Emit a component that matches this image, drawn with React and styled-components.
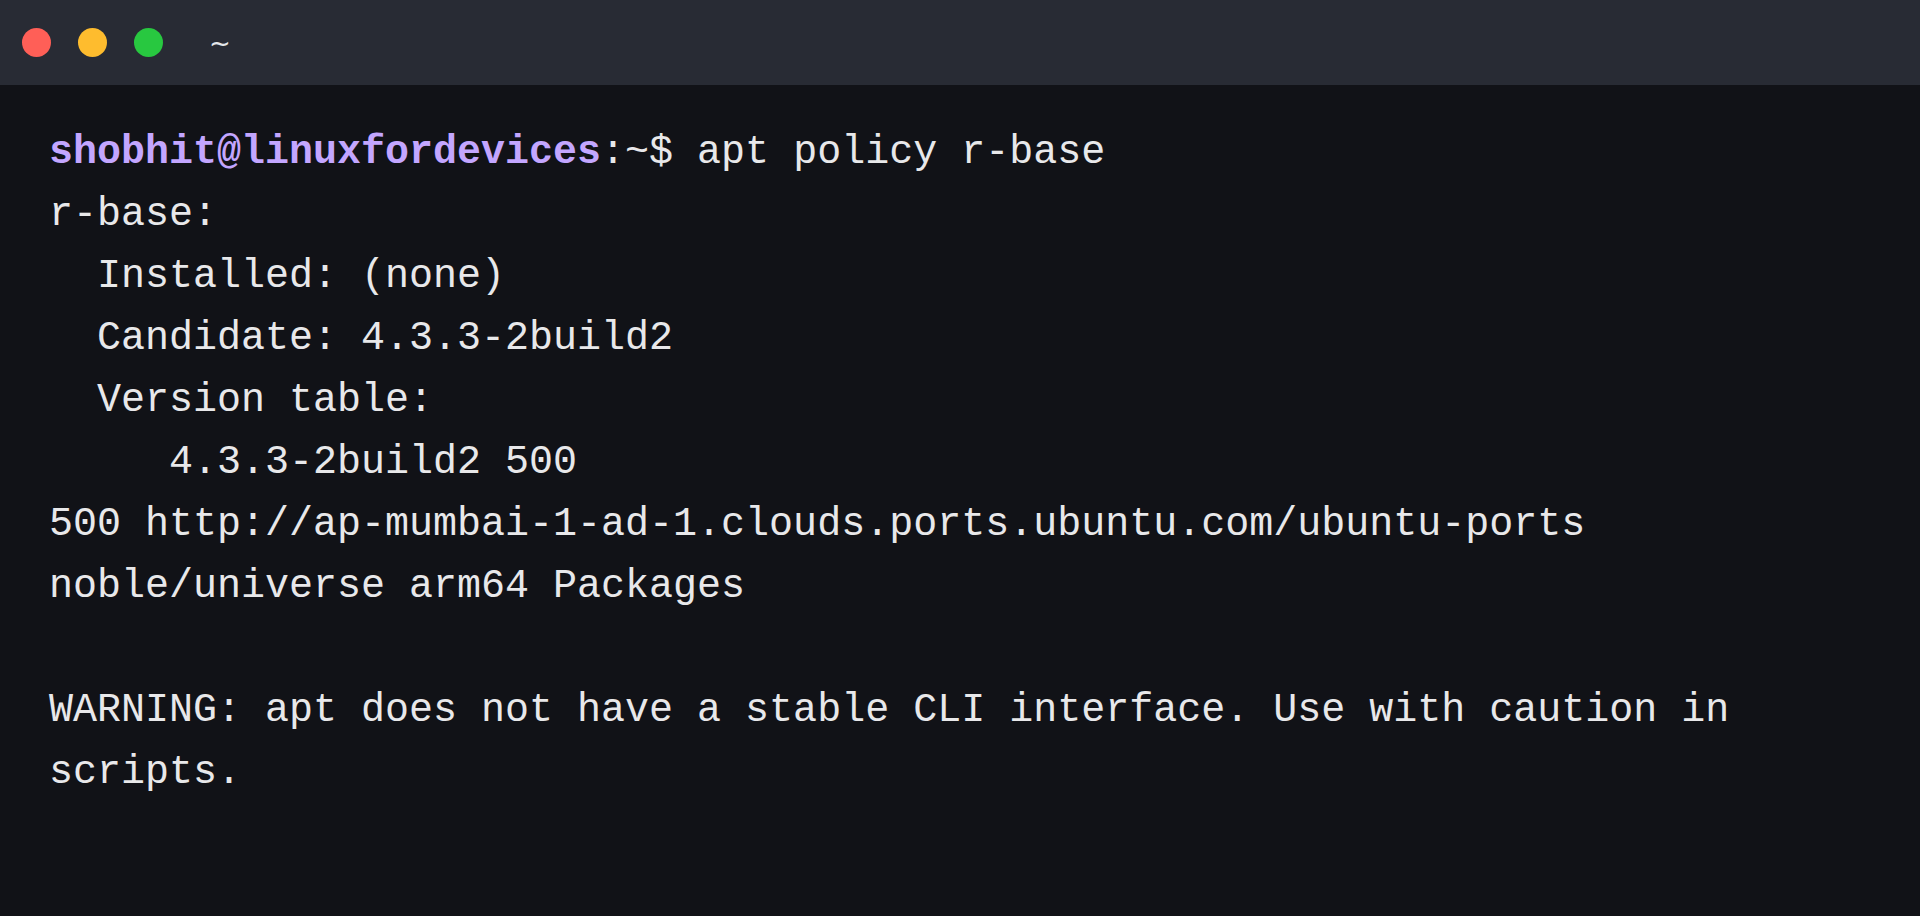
import React from "react";
import styled, { createGlobalStyle } from "styled-components";

const lines = [
  { prompt: true, text: " apt policy r-base" },
  { text: "r-base:" },
  { text: "  Installed: (none)" },
  { text: "  Candidate: 4.3.3-2build2" },
  { text: "  Version table:" },
  { text: "     4.3.3-2build2 500" },
  { text: "500 http://ap-mumbai-1-ad-1.clouds.ports.ubuntu.com/ubuntu-ports" },
  { text: "noble/universe arm64 Packages" },
  { text: "" },
  { text: "WARNING: apt does not have a stable CLI interface. Use with caution in" },
  { text: "scripts." },
];

export default function App() {
  return (
    <>
      <GlobalStyle />
      <Window>
        <TitleBar>
          <Dots>
            <Dot color="#ff5f57" />
            <Dot color="#febc2e" />
            <Dot color="#28c840" />
          </Dots>
          <Title>~</Title>
        </TitleBar>
        <Terminal>
          {lines.map((l, i) => (
            <Line key={i}>
              {l.prompt && (
                <>
                  <User>shobhit@linuxfordevices</User>:~$
                </>
              )}
              {l.text || " "}
            </Line>
          ))}
        </Terminal>
      </Window>
    </>
  );
}

const GlobalStyle = createGlobalStyle`
  html, body {
    margin: 0;
    padding: 0;
    background: #111217;
  }
`;

const Window = styled.div`
  display: flex;
  flex-direction: column;
  min-height: 100vh;
  background: #111217;
`;

const TitleBar = styled.div`
  height: 85px;
  display: flex;
  align-items: center;
  padding-left: 22px;
  gap: 46px;
  background: #282b34;
`;

const Dots = styled.div`
  display: flex;
  gap: 27px;
`;

const Dot = styled.span`
  width: 29px;
  height: 29px;
  border-radius: 50%;
  background: ${(p) => p.color};
`;

const Title = styled.span`
  font-family: "DejaVu Sans", sans-serif;
  font-size: 26px;
  color: #e4e6ea;
  line-height: 1;
`;

const Terminal = styled.div`
  padding: 37px 49px;
  font-family: "Liberation Mono", "DejaVu Sans Mono", monospace;
  font-size: 40px;
  line-height: 62px;
  color: #e8e8ea;
`;

const Line = styled.div`
  white-space: pre;
`;

const User = styled.span`
  color: #c3a6ff;
  font-weight: bold;
`;
